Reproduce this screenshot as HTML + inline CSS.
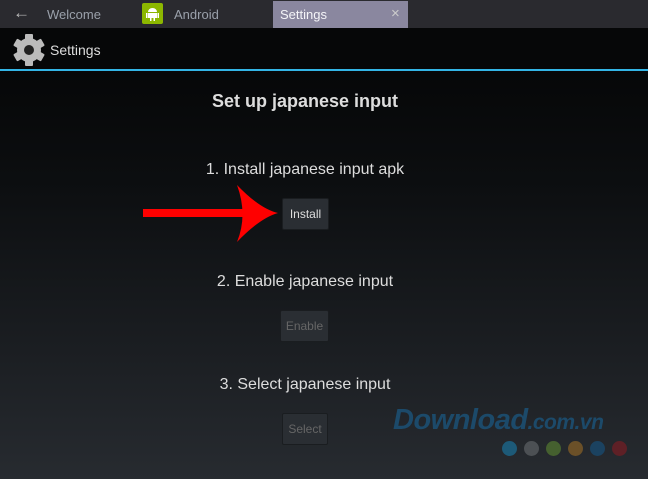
<!DOCTYPE html>
<html><head><style>
body{margin:0;width:648px;height:479px;overflow:hidden;font-family:"Liberation Sans",sans-serif;background:linear-gradient(#060708 70px,#0c0e10 180px,#1b1e22 350px,#272b30 479px);position:relative}
.a{position:absolute}
.t{color:#ddd;font-size:16px;text-align:center;width:610px;left:0}
.btn{position:absolute;background:#2a2e33;border:1px solid #1a1d20;color:#ddd;font-size:12px;text-align:center;line-height:30px;height:30px;border-radius:2px}
</style></head><body>
<div class="a" style="left:0;top:0;width:648px;height:28px;background:#2a2a2f"></div>
<div class="a" style="left:13px;top:3px;color:#bbb;font-size:17px">&#8592;</div>
<div class="a" style="left:47px;top:7px;color:#9aa0aa;font-size:13px">Welcome</div>
<div class="a" style="left:142px;top:3px;width:21px;height:21px;background:#8cb700;border-radius:2px"></div>
<svg class="a" style="left:146px;top:6px" width="13" height="15"><path d="M2 6a4.5 4 0 0 1 9 0z M2 7h9v5h-9z M0 7h1.5v5H0z M11.5 7H13v5h-1.5z M4 12h1.5v3H4z M7.5 12H9v3H7.5z" fill="#fff"/></svg>
<div class="a" style="left:174px;top:7px;color:#9aa0aa;font-size:13px">Android</div>
<div class="a" style="left:273px;top:1px;width:135px;height:27px;background:#8a879f"></div>
<div class="a" style="left:280px;top:7px;color:#f4f4f8;font-size:13px">Settings</div>
<div class="a" style="left:391px;top:5px;color:#ccc;font-size:15px">&#215;</div>
<div class="a" style="left:0;top:69px;width:648px;height:2px;background:#33b5e5"></div>
<svg class="a" style="left:12px;top:33px" width="34" height="34" viewBox="-17 -17 34 34"><g fill="#bbb"><rect x="-4" y="-16" width="8" height="32" rx="1"/><rect x="-4" y="-16" width="8" height="32" rx="1" transform="rotate(60)"/><rect x="-4" y="-16" width="8" height="32" rx="1" transform="rotate(120)"/><circle r="12"/></g><circle r="5" fill="#222"/></svg>
<div class="a" style="left:50px;top:42px;color:#ddd;font-size:14px">Settings</div>
<div class="a t" style="top:91px;font-weight:bold;font-size:18px">Set up japanese input</div>
<div class="a t" style="top:161px">1. Install japanese input apk</div>
<div class="btn" style="left:282px;top:198px;width:45px">Install</div>
<div class="a t" style="top:273px">2. Enable japanese input</div>
<div class="btn" style="left:280px;top:310px;width:47px;color:#666">Enable</div>
<div class="a t" style="top:376px">3. Select japanese input</div>
<div class="btn" style="left:282px;top:413px;width:44px;color:#666">Select</div>
<svg class="a" style="left:140px;top:183px" width="145" height="62"><rect x="3" y="26" width="100" height="8" fill="#f00"/><path d="M97 2Q120 26 138 30Q120 35 97 59Q108 32 97 2z" fill="#f00"/></svg>
<div class="a" style="left:393px;top:404px;color:#1c4a6a;font-size:29px;font-weight:bold;font-style:italic;letter-spacing:-0.5px">Download<span style="font-size:21px">.com.vn</span></div>
<div class="a" style="left:502px;top:441px;display:flex;gap:7px">
<i style="width:15px;height:15px;border-radius:50%;background:#1d5a78"></i><i style="width:15px;height:15px;border-radius:50%;background:#4c5054"></i><i style="width:15px;height:15px;border-radius:50%;background:#45602f"></i><i style="width:15px;height:15px;border-radius:50%;background:#6b5028"></i><i style="width:15px;height:15px;border-radius:50%;background:#1b4260"></i><i style="width:15px;height:15px;border-radius:50%;background:#5e2026"></i></div>
</body></html>
